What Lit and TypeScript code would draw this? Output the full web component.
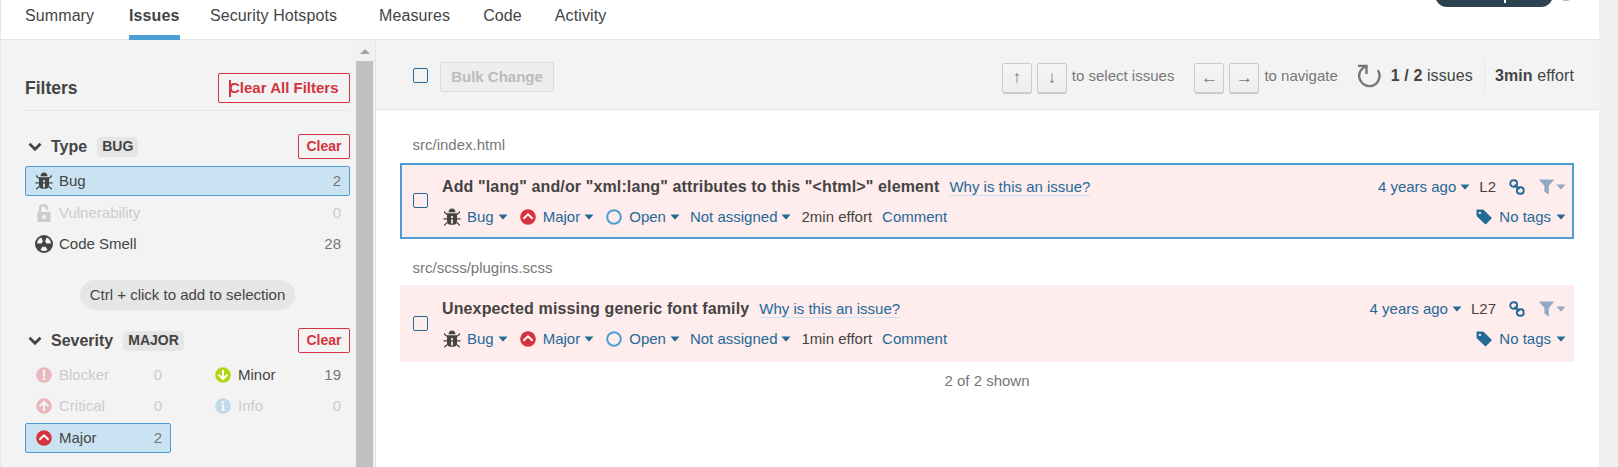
import { LitElement, html, css, svg } from "lit";
import { customElement } from "lit/decorators.js";
import { classMap } from "lit/directives/class-map.js";

const icon = (cls: string, vb: string, body: unknown) =>
  html`<svg class="icon ${cls}" viewBox=${vb}>${body}</svg>`;

const bug = () => icon("bug", "0 0 18 18", svg`
  <path fill="currentColor" d="M5.500 4.200C5.700 1.800 7 .5 9 .5s3.300 1.300 3.500 3.700z"/>
  <path fill="currentColor" fill-rule="evenodd" d="M3.200 5.200h11.600v1.600h-.8v6.700c0 2-1.500 3.300-3.600 3.300H7.600C5.500 16.800 4 15.500 4 13.500V6.800h-.8zM8.100 8v7.600h1.800V8z"/>
  <path fill="none" stroke="currentColor" stroke-width="1.200" d="M1.600 3.200v1.200l2 1.500M16.400 3.200v1.200l-2 1.500M.4 10.800h17.200M1.600 17.600v-.9l2.800-2.200M16.400 17.600v-.9l-2.800-2.200"/>`);
const lock = () => icon("glyph", "0 0 16 18", svg`
  <path fill="none" stroke="currentColor" stroke-width="2.400" d="M4 9V5.200C4 2.800 5.300 1.300 7.500 1.300S11 2.800 11 5v.8"/>
  <path fill="currentColor" fill-rule="evenodd" d="M2.500 8h11a1 1 0 0 1 1 1v8a1 1 0 0 1-1 1h-11a1 1 0 0 1-1-1V9a1 1 0 0 1 1-1zM8 11a2 2 0 1 0 .01 0z"/>`);
const smell = () => icon("bug", "0 0 18 18", svg`
  <circle cx="9" cy="9" r="9" fill="currentColor"/>
  <g fill="#f3f3f3"><path d="M2 8.600C2 6 3.600 3.600 6.300 2.400L8 6.600c-.8.500-1.200 1.100-1.300 2z"/>
  <path d="M16 8.600C16 6 14.400 3.600 11.700 2.400L10 6.600c.8.500 1.200 1.100 1.300 2z"/>
  <path d="M5.400 15L7.600 11.600c.9.500 1.900.5 2.800 0L12.600 15c-2 1.300-5.200 1.300-7.200 0z"/></g>`);
const disc = (kind: string) => icon("disc", "0 0 16 16", {
  blocker: svg`<circle cx="8" cy="8" r="7.800" fill="#d4333f"/><path fill="#fff" d="M6.700 2.800h2.600l-.3 6.400H7zM6.800 10.500h2.400v2.400H6.800z"/>`,
  critical: svg`<circle cx="8" cy="8" r="7.800" fill="#d4333f"/><path fill="none" stroke="#fff" stroke-width="2" d="M3.600 8.400L8 4l4.400 4.400M8 4.500V13"/>`,
  major: svg`<circle cx="8" cy="8" r="7.800" fill="#d4333f"/><path fill="none" stroke="#fff" stroke-width="2" d="M3.400 9.800L8 5.400l4.600 4.400"/>`,
  minor: svg`<circle cx="8" cy="8" r="7.800" fill="#b0d513"/><path fill="none" stroke="#fff" stroke-width="2" d="M3.600 7.600L8 12l4.400-4.400M8 11.500V3"/>`,
  info: svg`<circle cx="8" cy="8" r="7.800" fill="#4b9fd5"/><path fill="#fff" d="M6.900 3h2.300v2.200H6.900zM6.200 6.600h3v5h.8V13H6.200v-1.400H7V8h-.8z"/>`,
  open: svg`<circle cx="8" cy="8" r="6.800" fill="none" stroke="#4b9fd5" stroke-width="2"/>`,
}[kind]);
const caret = () => icon("caret", "0 0 10 6", svg`<path fill="currentColor" d="M.5.500h9L5.600 4.900q-.6.600-1.200 0z"/>`);
const chevron = () => icon("chevron", "0 0 14 10", svg`<path fill="none" stroke="currentColor" stroke-width="2.800" d="M1.500 1.800L7 7.200l5.500-5.400"/>`);
const link = () => icon("disc", "0 0 16 16", svg`
  <g fill="none" stroke="currentColor" stroke-width="1.900"><rect x="1.300" y="1.300" width="6.800" height="6.400" rx="3"/><rect x="7.900" y="8.300" width="6.800" height="6.400" rx="3"/><path d="M5.600 5.800l4.800 4.400"/></g>`);
const funnel = () => icon("funnel", "0 0 15 16", svg`<path fill="currentColor" d="M.6.500h13.800q.6.500 0 1.100L9.800 6.800V15.500L5.400 12.600V6.800L.6 1.600Q0 1 .6.500z"/>`);
const tag = () => icon("disc", "0 0 16 16", svg`<path fill="currentColor" fill-rule="evenodd" d="M1.300.500h5.200q.7 0 1.300.5l7.600 7.600q.6.600 0 1.200l-5.300 5.300q-.6.600-1.200 0L1.100 7.600Q.5 7 .5 6.200V1.300Q.5.500 1.300.5zM3.900 2.700a1.200 1.200 0 1 0 .01 0z"/>`);
const reload = () => icon("reload", "0 0 24 24", svg`
  <path fill="none" stroke="currentColor" stroke-width="2.400" d="M20.800 6.200A10.200 10.200 0 1 1 3.800 6.400Q5.500 4 8.600 2.300M1 1.900h8.500v8"/>`);

interface Facet { label: string; count: number; icon: () => unknown; on?: boolean; off?: boolean }
interface Issue { file: string; title: string; line: string; effort: string; selected: boolean }

const types: Facet[] = [
  { label: "Bug", count: 2, icon: bug, on: true },
  { label: "Vulnerability", count: 0, icon: lock, off: true },
  { label: "Code Smell", count: 28, icon: smell },
];
const severities: Facet[] = [
  { label: "Blocker", count: 0, icon: () => disc("blocker"), off: true },
  { label: "Minor", count: 19, icon: () => disc("minor") },
  { label: "Critical", count: 0, icon: () => disc("critical"), off: true },
  { label: "Info", count: 0, icon: () => disc("info"), off: true },
  { label: "Major", count: 2, icon: () => disc("major"), on: true },
];
const issues: Issue[] = [
  { file: "src/index.html", title: 'Add "lang" and/or "xml:lang" attributes to this "<html>" element', line: "L2", effort: "2min effort", selected: true },
  { file: "src/scss/plugins.scss", title: "Unexpected missing generic font family", line: "L27", effort: "1min effort", selected: false },
];

@customElement("app-root")
export class AppRoot extends LitElement {
  static styles = css`
    :host { display: flex; width: 1618px; height: 467px; overflow: hidden; background: #fff;
      font: 15px/18px "Liberation Sans", Arial, sans-serif; color: #444; white-space: nowrap; }
    * { box-sizing: border-box; }
    .page { flex: 1; display: flex; flex-direction: column; border-left: 1px solid #e6e6e6; position: relative; min-width: 0; }
    .gutter { width: 19px; background: #f0f0f0; }
    .icon { display: block; flex: none; }
    .bug { width: 18px; height: 18px; }
    .glyph { width: 16px; height: 18px; margin: 0 1px; }
    .disc { width: 16px; height: 16px; }
    .caret { width: 10px; height: 6px; }
    .chevron { width: 14px; height: 10px; }
    .funnel { width: 15px; height: 16px; }
    .reload { width: 24px; height: 24px; color: #777; margin-top: 1px; }

    .nav { height: 40px; border-bottom: 1px solid #e6e6e6; display: flex; padding-left: 24px; font-size: 16px; letter-spacing: .1px; }
    .tab { height: 40px; padding-top: 6px; margin-right: 33px; line-height: 19px; }
    .tab.first { width: 69px; margin-right: 35px; }
    .tab.active { width: 51px; font-weight: bold; border-bottom: 5px solid #4b9fd5; margin-right: 30px; letter-spacing: .1px; }
    .tab.wide { margin-right: 42px; }
    .pill { position: absolute; left: 1434px; top: -23px; width: 118px; height: 30px; border-radius: 12px; background: #2d4250; }
    .pill::after { content: ""; position: absolute; left: 69px; top: 23px; width: 2px; height: 3px; background: #fff; }
    .help { position: absolute; left: 1557px; top: -15px; width: 16px; height: 16px; border-radius: 50%; background: #b4b4b4; }

    .body { flex: 1; display: flex; min-height: 0; }
    .side { width: 375px; border-right: 1px solid #e6e6e6; background: #f3f3f3; display: flex; }
    .facets { width: 353px; padding: 33px 4px 0 24px; }
    .scroll { width: 21px; background: #f1f1f1; padding: 9px 2px 0 2px; display: flex; flex-direction: column; align-items: center; }
    .up { border: 5px solid transparent; border-top: 0; border-bottom: 5px solid #a3a3a3; }
    .thumb { width: 17px; flex: 1; background: #c1c1c1; margin-top: 7px; }
    .head { height: 38px; border-bottom: 1px solid #e6e6e6; display: flex; justify-content: space-between; font-size: 17.5px; font-weight: bold; }
    .head .name { line-height: 30px; }
    .btn { border: 1px solid #d4333f; border-radius: 2px; color: #d4333f; font-weight: bold; font-size: 15px; text-align: center; }
    .all { width: 132px; height: 30px; line-height: 28px; display: flex; align-items: center; padding-left: 10px; }
    .cursor { width: 2px; height: 17px; background: #d4333f; margin-right: -2px; }
    .clear { width: 52px; height: 25px; line-height: 22px; font-size: 14px; margin-left: auto; }
    .fh { display: flex; height: 25px; align-items: center; padding-left: 3px; font-weight: bold; font-size: 16px; }
    .fh.type { margin: 23px 0 7px; }
    .fh.sev { margin: 18px 0 7px; }
    .fh .name { margin: 0 10px 0 9px; }
    .badge { height: 20px; line-height: 18px; padding: 0 5px; border-radius: 4px; background: #e6e6e6; font-size: 14px; margin-top: 1px; }
    .rows { display: grid; gap: 1px 33px; }
    .rows.kinds .facet:first-child { margin-bottom: 1px; }
    .rows.two { grid-template-columns: 146px 146px; }
    .rows.two .facet:last-child { margin-top: 1px; }
    .facet { height: 30px; border: 1px solid transparent; border-radius: 2px; display: flex; align-items: center; padding: 0 8px 0 9px; }
    .facet .disc { margin: 0 1px; }
    .facet .lbl { margin-left: 6px; flex: 1; }
    .facet .num { color: #777; margin-top: -1px; }
    .facet.on { background: #cae3f2; border-color: #4b9fd5; }
    .facet.off, .facet.off .num { color: #ccc; }
    .facet.off .disc { opacity: .3; }
    .hint { width: 215px; height: 30px; line-height: 30px; border-radius: 15px; background: #e6e6e6; margin: 21px 0 0 55px; text-align: center; }

    .main { flex: 1; display: flex; flex-direction: column; min-width: 0; }
    .bar { height: 70px; background: #f3f3f3; border-bottom: 1px solid #e6e6e6; display: flex; align-items: center; padding: 2px 25px 0 37px; }
    .check { width: 15px; height: 15px; border: 1px solid #236a97; border-radius: 2px; flex: none; }
    .bulk { margin: 3px auto 0 12px; width: 114px; height: 30px; line-height: 28px; border: 1px solid #ddd; border-radius: 2px; background: #eee; color: #bbb; font-weight: bold; text-align: center; }
    .key { width: 30px; height: 31px; line-height: 27px; border: 1px solid #ccc; border-bottom-width: 2px; border-radius: 3px; background: linear-gradient(#f5f5f5, #eee); color: #777; text-align: center; margin: 6px 5px 0 0; font-size: 17px; }
    .keyhint { color: #777; margin-right: 20px; }
    .keyhint.last { margin-right: 19px; }
    .total { font-size: 16px; letter-spacing: .1px; }
    .total.count { margin-left: 10px; }
    .sep { width: 1px; height: 30px; background: #e6e6e6; margin: 0 10px 0 11px; }
    .list { padding: 0 25px 0 24px; }
    .file { color: #777; padding-left: 12.5px; line-height: 18px; margin: 26px 0 9px; }
    .issue + .file { margin: 20px 0 8px; }
    .issue { height: 77px; background: #ffecec; border: 2px solid #ffecec; display: flex; padding: 0 6px 0 11px; }
    .issue.sel { border-color: #4b9fd5; height: 76px; }
    .issue .check { margin: 29px 14px 0 0; }
    .issue.sel .check { margin-top: 28px; }
    .left { padding-top: 13px; flex: 1; }
    .right { padding-top: 13px; color: #236a97; display: flex; flex-direction: column; align-items: flex-end; gap: 12px; }
    .line { display: flex; align-items: center; height: 18px; }
    .left .meta { margin-top: 12px; color: #236a97; }
    .title { font-size: 16px; font-weight: bold; letter-spacing: .13px; }
    .why { color: #236a97; border-bottom: 1px solid #cae3f2; margin-left: 10px; height: 18px; }
    .meta .caret { margin: 0 0 0 4px; }
    .meta .bug { color: #444; margin: 0 6px 0 1px; }
    .meta .disc { margin: 0 7px 0 12px; }
    .assign { margin-left: 10px; }
    .eff { margin: 0 10px; color: #444; }
    .when { margin-right: 4px; }
    .ln { color: #444; margin: 0 13px 0 9px; }
    .right .funnel { margin: 0 2px 0 14px; opacity: .5; }
    .right .faded { opacity: .5; display: flex; }
    .notags { margin: 0 5px 0 7px; }
    .shown { color: #777; text-align: center; margin-top: 10px; }
  `;

  private facet(f: Facet) {
    return html`<div class=${classMap({ facet: true, on: !!f.on, off: !!f.off })}>${f.icon()}<span class="lbl">${f.label}</span><span class="num">${f.count}</span></div>`;
  }

  private issue(i: Issue) {
    return html`<div class="file">${i.file}</div>
      <div class=${classMap({ issue: true, sel: i.selected })}>
        <span class="check"></span>
        <div class="left">
          <div class="line"><span class="title">${i.title}</span><span class="why">Why is this an issue?</span></div>
          <div class="line meta">${bug()}<span>Bug</span>${caret()}${disc("major")}<span>Major</span>${caret()}${disc("open")}<span>Open</span>${caret()}<span class="assign">Not assigned</span>${caret()}<span class="eff">${i.effort}</span><span>Comment</span></div>
        </div>
        <div class="right">
          <div class="line"><span class="when">4 years ago</span>${caret()}<span class="ln">${i.line}</span>${link()}${funnel()}<span class="faded">${caret()}</span></div>
          <div class="line">${tag()}<span class="notags">No tags</span>${caret()}</div>
        </div>
      </div>`;
  }

  render() {
    return html`
      <div class="page">
        <div class="nav">
          <span class="tab first">Summary</span><span class="tab active">Issues</span><span class="tab wide">Security Hotspots</span><span class="tab">Measures</span><span class="tab">Code</span><span class="tab">Activity</span>
        </div>
        <div class="pill"></div><div class="help"></div>
        <div class="body">
          <div class="side">
            <div class="facets">
              <div class="head"><span class="name">Filters</span><span class="btn all"><i class="cursor"></i>Clear All Filters</span></div>
              <div class="fh type">${chevron()}<span class="name">Type</span><span class="badge">BUG</span><span class="btn clear">Clear</span></div>
              <div class="rows kinds">${types.map((f) => this.facet(f))}</div>
              <div class="hint">Ctrl + click to add to selection</div>
              <div class="fh sev">${chevron()}<span class="name">Severity</span><span class="badge">MAJOR</span><span class="btn clear">Clear</span></div>
              <div class="rows two">${severities.map((f) => this.facet(f))}</div>
            </div>
            <div class="scroll"><i class="up"></i><i class="thumb"></i></div>
          </div>
          <div class="main">
            <div class="bar">
              <span class="check"></span><span class="bulk">Bulk Change</span>
              <span class="key">↑</span><span class="key">↓</span><span class="keyhint">to select issues</span>
              <span class="key">←</span><span class="key">→</span><span class="keyhint last">to navigate</span>
              ${reload()}<span class="total count"><b>1 / 2</b> issues</span><i class="sep"></i><span class="total"><b>3min</b> effort</span>
            </div>
            <div class="list">${issues.map((i) => this.issue(i))}<div class="shown">2 of 2 shown</div></div>
          </div>
        </div>
      </div>
      <div class="gutter"></div>`;
  }
}
